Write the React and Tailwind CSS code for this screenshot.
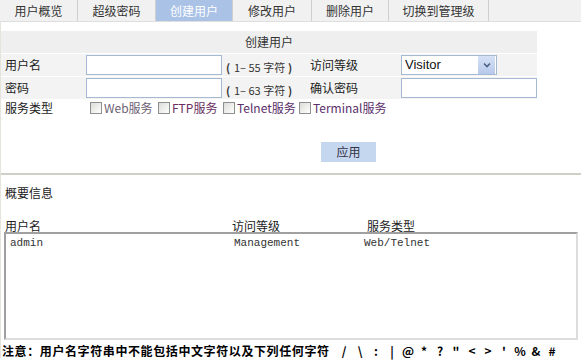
import React from "react";

const tabs = [
  { t: "用户概览", w: "w-[78px]" },
  { t: "超级密码", w: "w-[78px]" },
  { t: "创建用户", w: "w-[77px]", active: true },
  { t: "修改用户", w: "w-[79px]" },
  { t: "删除用户", w: "w-[77px]" },
  { t: "切换到管理级", w: "w-[100px]" },
];

const symbols = ["/", "\\", ":", "|", "@", "*", "?", "\"", "<", ">", "'", "%", "&", "#"];

function Box() {
  return (
    <span className="inline-block w-[12px] h-[12px] border border-[#8e8f8f] bg-gradient-to-br from-[#dcdcd7] to-white mr-[2px] shrink-0" />
  );
}

function Check({ label, w, color }) {
  return (
    <div className={`flex items-center ${w}`}>
      <Box />
      <span className={`text-[12px] leading-[14px] ${color}`}>{label}</span>
    </div>
  );
}

function Hint({ n }) {
  return (
    <div className="w-[88px] pt-[5px] pl-[1px] text-[11px] text-[#333] whitespace-nowrap flex items-center">
      <b className="w-[10px] text-center">(</b>
      <span className="pl-[1px]">1– {n} 字符</span>
      <b className="w-[10px] text-center">)</b>
    </div>
  );
}

export default function App() {
  return (
    <div
      className="w-[581px] h-[360px] bg-white overflow-hidden text-[#222] relative"
      style={{ fontFamily: '"Noto Sans CJK SC", "Liberation Sans", sans-serif' }}
    >
      {/* tabs */}
      <div className="flex h-[22px] bg-[#f1f1f1] border-b border-[#dedede]">
        {tabs.map((x) => (
          <div
            key={x.t}
            className={`${x.w} h-full flex items-center justify-center text-[12px] border-r border-[#cfcfcf] ${
              x.active ? "bg-[#a9c2e6] text-white" : "text-[#333]"
            }`}
          >
            {x.t}
          </div>
        ))}
      </div>

      <div className="border-l border-[#e4e4dc]">
        <div className="h-[9px]" />
        {/* header */}
        <div className="w-[536px] h-[22px] bg-[#efefef] flex items-center justify-center text-[12px] text-[#333]">
          创建用户
        </div>

        {/* row 1 */}
        <div className="w-[536px] h-[22px] mt-[1px] bg-[#f3f3f3] flex items-center text-[12px]">
          <div className="w-[85px] pl-[4px]">用户名</div>
          <div className="w-[136px] h-[20px] border border-[#a5b9d1] bg-white" />
          <Hint n="55" />
          <div className="w-[91px]">访问等级</div>
          <div className="w-[96px] h-[20px] border border-[#a5b9d1] bg-white flex items-center">
            <span className="flex-1 pl-[3px] text-[13px] text-[#111]" style={{ fontFamily: '"Liberation Sans", sans-serif' }}>
              Visitor
            </span>
            <span className="w-[17px] h-[18px] mr-[1px] bg-gradient-to-b from-[#d6e1f5] to-[#b7c9ec] flex items-center justify-center">
              <svg width="8" height="6" viewBox="0 0 8 6">
                <path d="M1 1.5 L4 4.5 L7 1.5" fill="none" stroke="#4d6185" strokeWidth="1.6" />
              </svg>
            </span>
          </div>
        </div>

        {/* row 2 */}
        <div className="w-[536px] h-[22px] mt-[1px] bg-[#f3f3f3] flex items-center text-[12px]">
          <div className="w-[85px] pl-[4px]">密码</div>
          <div className="w-[136px] h-[20px] border border-[#a5b9d1] bg-white" />
          <Hint n="63" />
          <div className="w-[91px]">确认密码</div>
          <div className="w-[136px] h-[20px] border border-[#a5b9d1] bg-white" />
        </div>

        {/* row 3 */}
        <div className="h-[16px] mt-[1px] flex items-center text-[12px]">
          <div className="w-[89px] pl-[4px]">服务类型</div>
          <Check label="Web服务" w="w-[68px]" color="text-[#6d5f74]" />
          <Check label="FTP服务" w="w-[65px]" color="text-[#6a2f5e]" />
          <Check label="Telnet服务" w="w-[76px]" color="text-[#5a2f6a]" />
          <Check label="Terminal服务" w="w-[90px]" color="text-[#5a2f6a]" />
        </div>

        {/* apply */}
        <div className="flex mt-[26px]">
          <div className="ml-[320px] w-[55px] h-[20px] bg-[#c5d6ef] flex items-center justify-center text-[12px] text-[#334]">
            应用
          </div>
        </div>

        <div className="mt-[11px] h-[2px] bg-[#cfcfc6]" />

        <div className="mt-[11px] pl-[4px] text-[12px] leading-[14px]">概要信息</div>

        <div className="mt-[19px] flex text-[12px] leading-[14px]">
          <div className="w-[231px] pl-[4px]">用户名</div>
          <div className="w-[135px]">访问等级</div>
          <div>服务类型</div>
        </div>

        <div className="ml-[3px] mt-[-1px] w-[574px] h-[108px] border-2 border-t-[#a0a0a0] border-l-[#a0a0a0] border-r-[#dcdcdc] border-b-[#dcdcdc] bg-white">
          <div
            className="flex pt-[3px] text-[11px] leading-[12px] text-[#333]"
            style={{ fontFamily: '"Liberation Mono", monospace' }}
          >
            <div className="w-[228px] pl-[4px]">admin</div>
            <div className="w-[130px]">Management</div>
            <div>Web/Telnet</div>
          </div>
        </div>

        <div className="mt-[4px] pl-[1px] flex items-center text-[12px] leading-[14px] font-bold text-black whitespace-nowrap">
          <span className="tracking-[0.6px] w-[334px]">注意：用户名字符串中不能包括中文字符以及下列任何字符</span>
          {symbols.map((s, i) => (
            <span key={i} className="w-[16px] text-center">
              {s}
            </span>
          ))}
        </div>
      </div>
    </div>
  );
}
